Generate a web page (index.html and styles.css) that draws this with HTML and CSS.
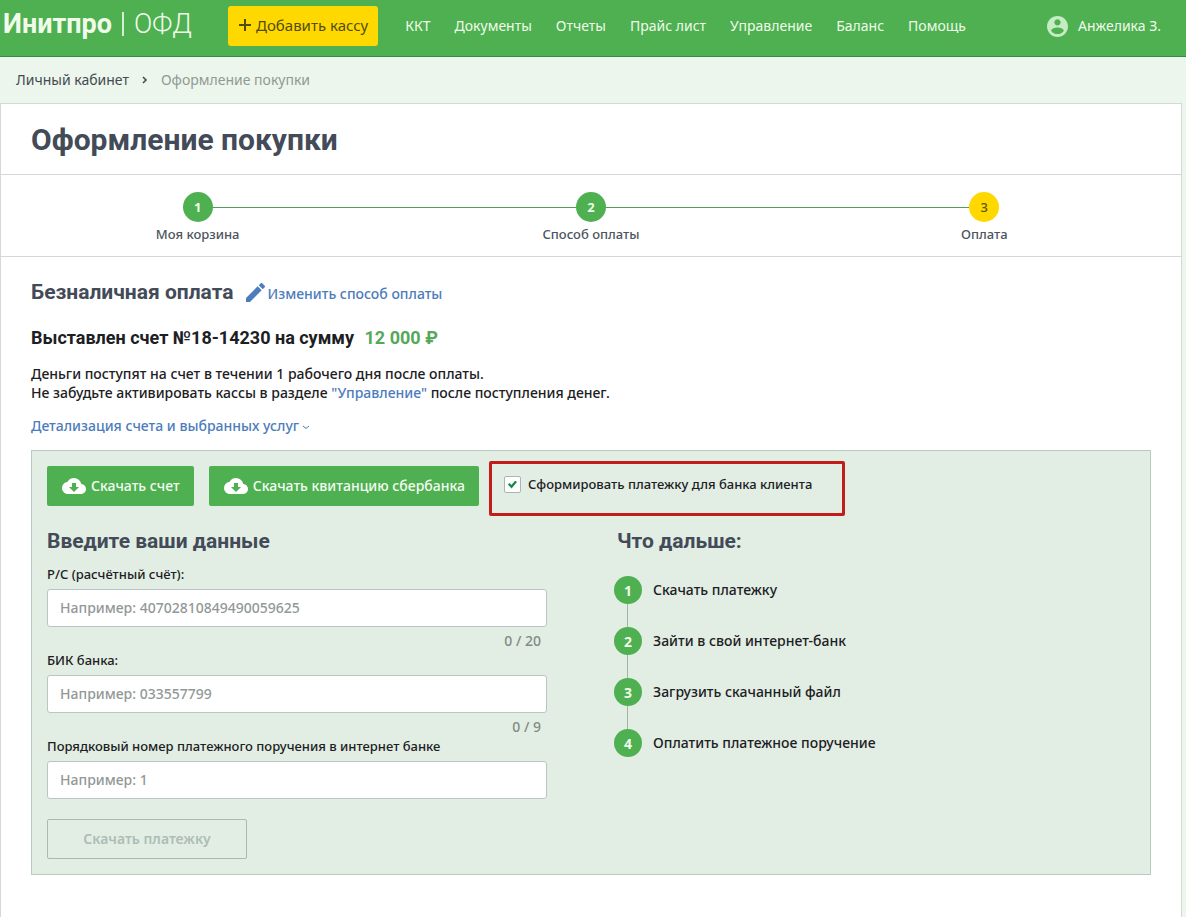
FILE: index.html
```html
<!DOCTYPE html>
<html lang="ru">
<head>
<meta charset="utf-8">
<title>Оформление покупки</title>
<link rel="stylesheet" href="styles.css">
</head>
<body>
<svg class="sprite" aria-hidden="true">
  <symbol id="cloud" viewBox="0 0 24 24"><path d="M19.35 10.04A7.49 7.49 0 0 0 12 4C9.11 4 6.6 5.64 5.35 8.04A5.994 5.994 0 0 0 0 14c0 3.31 2.69 6 6 6h13c2.76 0 5-2.24 5-5 0-2.64-2.05-4.78-4.65-4.96zM17 13l-5 5-5-5h3V9h4v4h3z"/></symbol>
</svg>
<header class="header">
  <a class="logo" href="#"><b>Инитпро</b><span class="logo-bar"></span><span class="logo-light">ОФД</span></a>
  <button class="add" type="button"><svg viewBox="0 0 14 14" width="14" height="14"><path d="M7 1v12M1 7h12" stroke="currentColor" stroke-width="2" fill="none"/></svg>Добавить кассу</button>
  <nav class="nav">
    <a href="#">ККТ</a><a href="#">Документы</a><a href="#">Отчеты</a><a href="#">Прайс лист</a><a href="#">Управление</a><a href="#">Баланс</a><a href="#">Помощь</a>
  </nav>
  <a class="user" href="#"><svg viewBox="2 2 20 20" width="21" height="21"><path fill="currentColor" d="M12 2C6.48 2 2 6.48 2 12s4.48 10 10 10 10-4.48 10-10S17.52 2 12 2zm0 3c1.66 0 3 1.34 3 3s-1.340 3-3 3-3-1.340-3-3 1.340-3 3-3zm0 14.200c-2.500 0-4.710-1.280-6-3.220.030-1.990 4-3.080 6-3.080 1.990 0 5.970 1.090 6 3.080-1.290 1.940-3.500 3.220-6 3.220z"/></svg><span>Анжелика З.</span></a>
</header>
<nav class="crumbs" aria-label="Навигация">
  <a href="#">Личный кабинет</a>
  <svg viewBox="0 0 6 8" width="6" height="8"><path d="M1 1l3 3-3 3" stroke="#444b50" stroke-width="1.600" fill="none"/></svg>
  <span>Оформление покупки</span>
</nav>
<main class="card">
  <h1 class="title">Оформление покупки</h1>
  <ol class="steps">
    <li class="step"><span class="dot">1</span>Моя корзина</li>
    <li class="step"><span class="dot">2</span>Способ оплаты</li>
    <li class="step"><span class="dot dot-current">3</span>Оплата</li>
  </ol>
  <section class="content">
    <div class="method">
      <h2 class="subtitle">Безналичная оплата</h2>
      <a class="link edit" href="#"><svg viewBox="3 3 18 18" width="19" height="19"><path fill="currentColor" d="M3 17.250V21h3.750L17.810 9.940l-3.750-3.750L3 17.250zM20.710 7.040a.996.996 0 0 0 0-1.410l-2.340-2.340a.996.996 0 0 0-1.410 0l-1.830 1.830 3.750 3.750 1.830-1.830z"/></svg><span>Изменить способ оплаты</span></a>
    </div>
    <p class="invoice">Выставлен счет №18-14230 на сумму <span class="sum">12 000 ₽</span></p>
    <p class="note">Деньги поступят на счет в течении 1 рабочего дня после оплаты.<br>Не забудьте активировать кассы в разделе <a class="link" href="#">"Управление"</a> после поступления денег.</p>
    <a class="link details" href="#">Детализация счета и выбранных услуг<svg viewBox="0 0 8 5" width="8" height="5"><path d="M1 1l3 2.500L7 1" stroke="currentColor" fill="none"/></svg></a>
    <div class="panel">
      <div class="actions">
        <button class="btn" type="button"><svg width="24" height="24"><use href="#cloud"/></svg><span>Скачать счет</span></button>
        <button class="btn" type="button"><svg width="24" height="24"><use href="#cloud"/></svg><span>Скачать квитанцию сбербанка</span></button>
        <div class="highlight">
          <label class="check"><input type="checkbox" checked>Сформировать платежку для банка клиента</label>
        </div>
      </div>
      <div class="columns">
        <form class="form">
          <h2 class="subtitle">Введите ваши данные</h2>
          <label class="label" for="acc">Р/С (расчётный счёт):</label>
          <input class="field" id="acc" type="text" placeholder="Например: 40702810849490059625">
          <span class="count">0 / 20</span>
          <label class="label" for="bik">БИК банка:</label>
          <input class="field" id="bik" type="text" placeholder="Например: 033557799">
          <span class="count">0 / 9</span>
          <label class="label" for="num">Порядковый номер платежного поручения в интернет банке</label>
          <input class="field" id="num" type="text" placeholder="Например: 1">
          <button class="submit" type="button" disabled>Скачать платежку</button>
        </form>
        <section class="next">
          <h2 class="subtitle">Что дальше:</h2>
          <ol class="todo">
            <li><span class="dot">1</span><span>Скачать платежку</span></li>
            <li><span class="dot">2</span><span>Зайти в свой интернет-банк</span></li>
            <li><span class="dot">3</span><span>Загрузить скачанный файл</span></li>
            <li><span class="dot">4</span><span>Оплатить платежное поручение</span></li>
          </ol>
        </section>
      </div>
    </div>
  </section>
</main>
</body>
</html>
```
FILE: styles.css
```css
* { box-sizing: border-box; }
body {
  margin: 0;
  min-height: 100vh;
  display: flex;
  flex-direction: column;
  background: #edf6ec;
  color: #1c2023;
  font: 500 14px/19px "Noto Sans", "Open Sans", sans-serif;
}
h1, h2, p, ol { margin: 0; padding: 0; }
ol { list-style: none; }
a { color: inherit; text-decoration: none; }
button, input { font: inherit; }
svg { flex: none; }
.sprite { position: absolute; width: 0; height: 0; }

.header {
  display: flex;
  align-items: center;
  height: 57px;
  padding: 0 25px 4px 3px;
  background: #4eb051;
  border-bottom: 1px solid #3b8a43;
  color: #f0fbea;
  font-weight: 400;
}
.logo {
  display: flex;
  align-items: center;
  width: 225px;
  font: 27px/34px Roboto, sans-serif;
  padding-bottom: 4px;
}
.logo-bar { width: 2px; height: 24px; margin: 0 10px; background: #d5f0d0; }
.logo-light { font-weight: 300; }
.add {
  display: flex;
  align-items: center;
  gap: 4px;
  height: 40px;
  padding: 0 10px 2px;
  border: 0;
  border-radius: 3px;
  background: #ffd800;
  color: #4f4d10;
  font-size: 15px;
}
.nav { display: flex; gap: 24px; margin-left: 27px; padding-bottom: 2px; }
.user { display: flex; align-items: center; gap: 10px; margin-left: auto; }
.user svg { color: #c5ecc2; }
.user span { padding-bottom: 2px; }

.crumbs {
  display: flex;
  align-items: center;
  gap: 13px;
  height: 46px;
  padding: 0 16px 2px;
  color: #8f9a94;
  font-weight: 400;
}
.crumbs a { color: #444b50; }
.crumbs svg { margin-top: 2px; }

.card {
  flex: 1;
  margin-right: 4px;
  background: #fff;
  border: 1px solid #d3d9d8;
  border-bottom: 0;
}
.title {
  padding: 18px 30px 17px;
  border-bottom: 1px solid #d3d7d9;
  font: 700 30px/35px Roboto, sans-serif;
  color: #434a58;
}
.steps { display: flex; padding: 17px 0 12px; border-bottom: 1px solid #d3d7d9; }
.step {
  position: relative;
  flex: 1;
  display: flex;
  flex-direction: column;
  align-items: center;
  gap: 3px;
  font-size: 13px;
  color: #4c5560;
}
.step + .step::before {
  content: "";
  position: absolute;
  top: 15px;
  right: 50%;
  width: 100%;
  height: 1px;
  background: #4f9f58;
}
.dot {
  position: relative;
  z-index: 1;
  display: grid;
  place-items: center;
  width: 30px;
  height: 30px;
  border-radius: 50%;
  background: #4eb051;
  color: #effbe9;
  font-weight: 700;
}
.dot-current { background: #ffd800; color: #5b5713; font-weight: 500; }

.content { padding: 22px 30px 42px; }
.subtitle { font: 700 21px/26px Roboto, sans-serif; color: #434a58; }
.link { color: #4c7cbb; }
.method { display: flex; align-items: center; gap: 13px; }
.edit { display: flex; align-items: center; gap: 2px; }
.edit span { padding-top: 2px; }
.invoice { margin-top: 20px; font: 700 18px/26px Roboto, sans-serif; }
.sum { margin-left: 6px; color: #55a85a; }
.note { margin-top: 13px; }
.details { display: inline-flex; align-items: center; gap: 3px; margin-top: 14px; }
.details svg { margin-top: 3px; }

.panel {
  margin-top: 15px;
  padding: 10px 15px 15px;
  background: #e2eee3;
  border: 1px solid #b9cbc1;
}
.actions { display: flex; align-items: flex-start; }
.btn {
  display: flex;
  align-items: center;
  gap: 5px;
  height: 40px;
  margin: 5px 15px 0 0;
  padding: 0 14px 0 15px;
  border: 0;
  border-radius: 2px;
  background: #4eb051;
  color: #f4fcf1;
}
.btn svg { fill: #fff; }
.btn span { padding-bottom: 2px; }
.highlight {
  width: 356px;
  height: 55px;
  margin: 0 0 1px -5px;
  padding: 11px 12px;
  border: 3px solid #c21d1b;
  border-radius: 2px;
}
.check { display: flex; align-items: center; gap: 7px; font-size: 13px; }
.check input {
  appearance: none;
  display: grid;
  place-items: center;
  width: 17px;
  height: 17px;
  margin: 0;
  border: 1px solid #a9b6b4;
  border-radius: 2px;
  background: #fff;
}
.check input:checked::before {
  content: "";
  width: 9px;
  height: 8px;
  background: #168a48;
  clip-path: polygon(0 50%, 18% 30%, 38% 55%, 82% 0, 100% 18%, 40% 100%);
}
.columns { display: flex; gap: 67px; padding-top: 11px; }
.form { display: flex; flex-direction: column; width: 500px; }
.label { margin-top: 11px; font-size: 13px; }
.count + .label { margin-top: 1px; }
.field {
  width: 100%;
  height: 38px;
  margin-top: 5px;
  padding: 0 12px 2px;
  border: 1px solid #b7c6c6;
  border-radius: 3px;
  background: #fff;
}
.field::placeholder { color: #929897; opacity: 1; }
.count { margin: 4px 6px 0 0; text-align: right; color: #7f8b85; }
.submit {
  width: 200px;
  height: 40px;
  margin-top: 20px;
  padding-bottom: 3px;
  border: 1px solid #a9bab0;
  border-radius: 2px;
  background: transparent;
  color: #adbdb7;
  font-weight: 600;
}
.next .subtitle { padding-left: 3px; }
.todo { display: grid; gap: 23px; margin-top: 22px; }
.todo li { position: relative; display: flex; align-items: center; gap: 11px; }
.todo .dot { width: 28px; height: 28px; }
.todo .dot + span { padding-bottom: 2px; }
.todo li + li::before {
  content: "";
  position: absolute;
  left: 13px;
  top: -23px;
  width: 1px;
  height: 23px;
  background: #9fb8a6;
}
```
